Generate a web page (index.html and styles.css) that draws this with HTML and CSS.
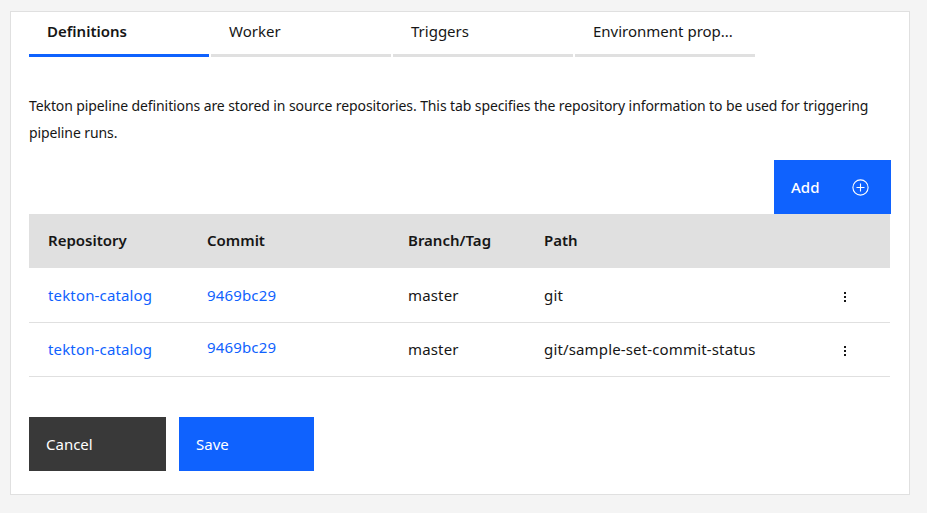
FILE: index.html
```html
<!DOCTYPE html>
<html>
<head>
<meta charset="utf-8">
<link rel="stylesheet" href="styles.css">
</head>
<body>
<div class="card">
  <div class="tabs">
    <div class="tab active">Definitions</div>
    <div class="tab">Worker</div>
    <div class="tab">Triggers</div>
    <div class="tab">Environment prop...</div>
  </div>
  <p class="desc">Tekton pipeline definitions are stored in source repositories. This tab specifies the repository information to be used for triggering pipeline runs.</p>
  <div class="toolbar">
    <button class="btn btn-add"><span>Add</span>
      <svg width="17" height="17" viewBox="0 0 17 17" class="icon"><circle cx="8.5" cy="8.5" r="7.6" fill="none" stroke="#fff" stroke-width="1.1"/><path d="M8.5 4.5v8M4.5 8.5h8" stroke="#fff" stroke-width="1.1"/></svg>
    </button>
  </div>
  <table class="tbl">
    <thead>
      <tr><th class="c1">Repository</th><th class="c2">Commit</th><th class="c3">Branch/Tag</th><th class="c4">Path</th><th class="c5"></th></tr>
    </thead>
    <tbody>
      <tr><td><a>tekton-catalog</a></td><td><a>9469bc29</a></td><td>master</td><td>git</td><td class="menu"><span class="dots"><i></i><i></i><i></i></span></td></tr>
      <tr><td><a>tekton-catalog</a></td><td><a class="up">9469bc29</a></td><td>master</td><td>git/sample-set-commit-status</td><td class="menu"><span class="dots"><i></i><i></i><i></i></span></td></tr>
    </tbody>
  </table>
  <div class="actions">
    <button class="btn btn-cancel">Cancel</button>
    <button class="btn btn-save">Save</button>
  </div>
</div>
</body>
</html>
```
FILE: styles.css
```css
* { box-sizing: border-box; }
html, body { margin: 0; padding: 0; }
body {
  background: #f4f4f4;
  font-family: "Noto Sans", "Open Sans", sans-serif;
  color: #161616;
  padding: 11px 17px 0 10px;
}
.card {
  background: #fff;
  border: 1px solid #e0e0e0;
  width: 900px;
  height: 484px;
  padding: 0 18px 0 18px;
}
.tabs {
  display: flex;
  gap: 2px;
  height: 45px;
}
.tab {
  width: 180px;
  height: 45px;
  padding: 8px 0 0 18px;
  font-size: 15px;
  border-bottom: 3px solid #e0e0e0;
  color: #161616;
  line-height: 22px;
}
.tab.active {
  font-weight: 600;
  border-bottom-color: #0f62fe;
}
.desc {
  margin: 35px 0 0 0;
  font-size: 14px;
  line-height: 27px;
  letter-spacing: -0.1px;
  color: #161616;
}
.toolbar {
  display: flex;
  justify-content: flex-end;
  margin-top: 14px;
}
.btn {
  border: 0;
  font-family: inherit;
  font-size: 15px;
  color: #fff;
  text-align: left;
  cursor: pointer;
}
.btn-add {
  background: #0f62fe;
  width: 117px;
  height: 54px;
  padding: 0 22px 0 17px;
  display: flex;
  align-items: center;
  justify-content: space-between;
  font-weight: 500;
}
.tbl {
  width: 861px;
  border-collapse: collapse;
  font-size: 15px;
}
.tbl th {
  background: #e0e0e0;
  height: 54px;
  text-align: left;
  font-weight: 600;
  padding: 0 0 3px 19px;
}
.tbl td {
  height: 54px;
  padding: 0 0 0 19px;
  border-bottom: 1px solid #e0e0e0;
}
.tbl tbody td { letter-spacing: 0.15px; }
.c1 { width: 159px; }
.c2 { width: 201px; }
.c3 { width: 136px; }
.c4 { width: 300px; }
.tbl a { color: #0f62fe; }
.tbl a.up { position: relative; top: -2px; }
.dots {
  display: inline-flex;
  flex-direction: column;
  gap: 2px;
  vertical-align: middle;
}
.dots i {
  display: block;
  width: 2px;
  height: 2px;
  background: #161616;
}
.actions {
  display: flex;
  gap: 13px;
  margin-top: 40px;
}
.btn-cancel, .btn-save {
  height: 54px;
  padding: 0 0 0 17px;
}
.btn-cancel { background: #393939; width: 137px; }
.btn-save { background: #0f62fe; width: 135px; }
```
